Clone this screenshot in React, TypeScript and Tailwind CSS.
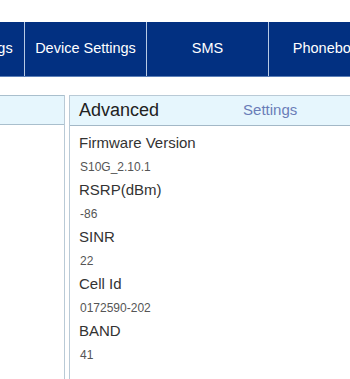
import React from "react";

const tabs = ["WLAN Settings", "Device Settings", "SMS", "Phonebook"];
const rows: [string, string][] = [
  ["Firmware Version", "S10G_2.10.1"],
  ["RSRP(dBm)", "-86"],
  ["SINR", "22"],
  ["Cell Id", "0172590-202"],
  ["BAND", "41"],
];

export default function App() {
  return (
    <div
      className="w-[350px] h-[379px] overflow-hidden bg-white relative"
      style={{ fontFamily: '"Liberation Sans", Arial, sans-serif' }}
    >
      <div className="h-[22px]" />
      <div className="flex ml-[-97px] h-[55px] w-[600px] bg-[#023081] border-b border-[#5b7fb8]">
        {tabs.map((t) => (
          <div
            key={t}
            className="w-[122px] shrink-0 flex items-center justify-center text-white text-[14.5px] border-r border-[#b7c9e4] whitespace-nowrap"
          >
            {t}
          </div>
        ))}
      </div>
      <div className="h-[18px]" />
      <div className="flex gap-[4px]">
        <div className="w-[65px] shrink-0 h-[300px] border-r border-[#b9cad6]">
          <div className="h-[30px] bg-[#e6f6fd] border-y border-[#a9bfcd]" />
        </div>
        <div className="w-[320px] shrink-0 h-[300px] border border-[#b9cad6]">
          <div className="h-[30px] bg-[#e6f6fd] border-b border-[#a3b8c7] flex items-center pl-[9px]">
            <span className="text-[18px] text-[#222]">Advanced</span>
            <span className="ml-[84px] text-[15px] text-[#6a7db8]">Settings</span>
          </div>
          <div className="pl-[9px] pt-[5px]">
            {rows.map(([l, v]) => (
              <div key={l}>
                <div className="h-[24px] flex items-center text-[15px] text-[#333]">{l}</div>
                <div className="h-[23px] flex items-center text-[12px] text-[#555] pl-[1px]">{v}</div>
              </div>
            ))}
          </div>
        </div>
      </div>
    </div>
  );
}
